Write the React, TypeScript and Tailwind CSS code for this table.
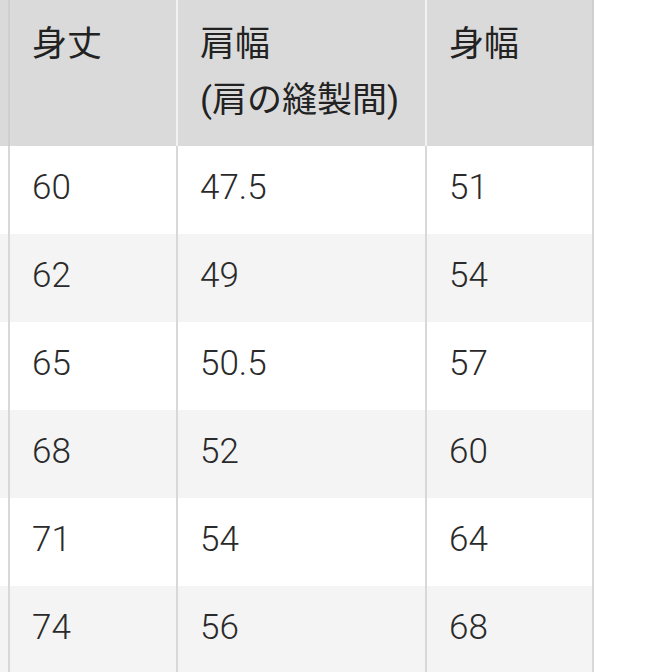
const rows = [
  ['60', '47.5', '51'],
  ['62', '49', '54'],
  ['65', '50.5', '57'],
  ['68', '52', '60'],
  ['71', '54', '64'],
  ['74', '56', '68'],
];

const font = { fontFamily: 'Roboto, "Noto Sans CJK JP", sans-serif' };

export default function App() {
  return (
    <div className="w-[672px] h-[672px] overflow-hidden bg-white text-[#222]" style={font}>
      <div className="w-[594px]">
        {/* Header */}
        <div className="grid grid-cols-[10px_168px_249px_167px] h-[146px] bg-[#dadada]">
          <div className="border-r-2 border-[#cfcfcf]" />
          <div className="border-r-2 border-[#f2f2f2] pl-[22px] pt-[17px] text-[35px] leading-[56px]">身丈</div>
          <div className="border-r-2 border-[#f2f2f2] pl-[22px] pt-[17px] text-[35px] leading-[56px]">
            肩幅
            <br />
            (肩の縫製間)
          </div>
          <div className="border-r-2 border-[#cfcfcf] pl-[22px] pt-[17px] text-[35px] leading-[56px]">身幅</div>
        </div>

        {/* Body */}
        {rows.map((r, i) => (
          <div
            key={i}
            className={`grid grid-cols-[10px_168px_249px_167px] h-[88px] ${i % 2 === 1 ? 'bg-[#f4f4f4]' : 'bg-white'}`}
          >
            <div className="border-r-2 border-[#d8d8d8]" />
            {r.map((v, j) => (
              <div
                key={j}
                className="border-r-2 border-[#d8d8d8] pl-[22px] flex items-center pb-[3px] text-[35px] font-light text-[#2a2a2a]"
              >
                {v}
              </div>
            ))}
          </div>
        ))}
      </div>
    </div>
  );
}
